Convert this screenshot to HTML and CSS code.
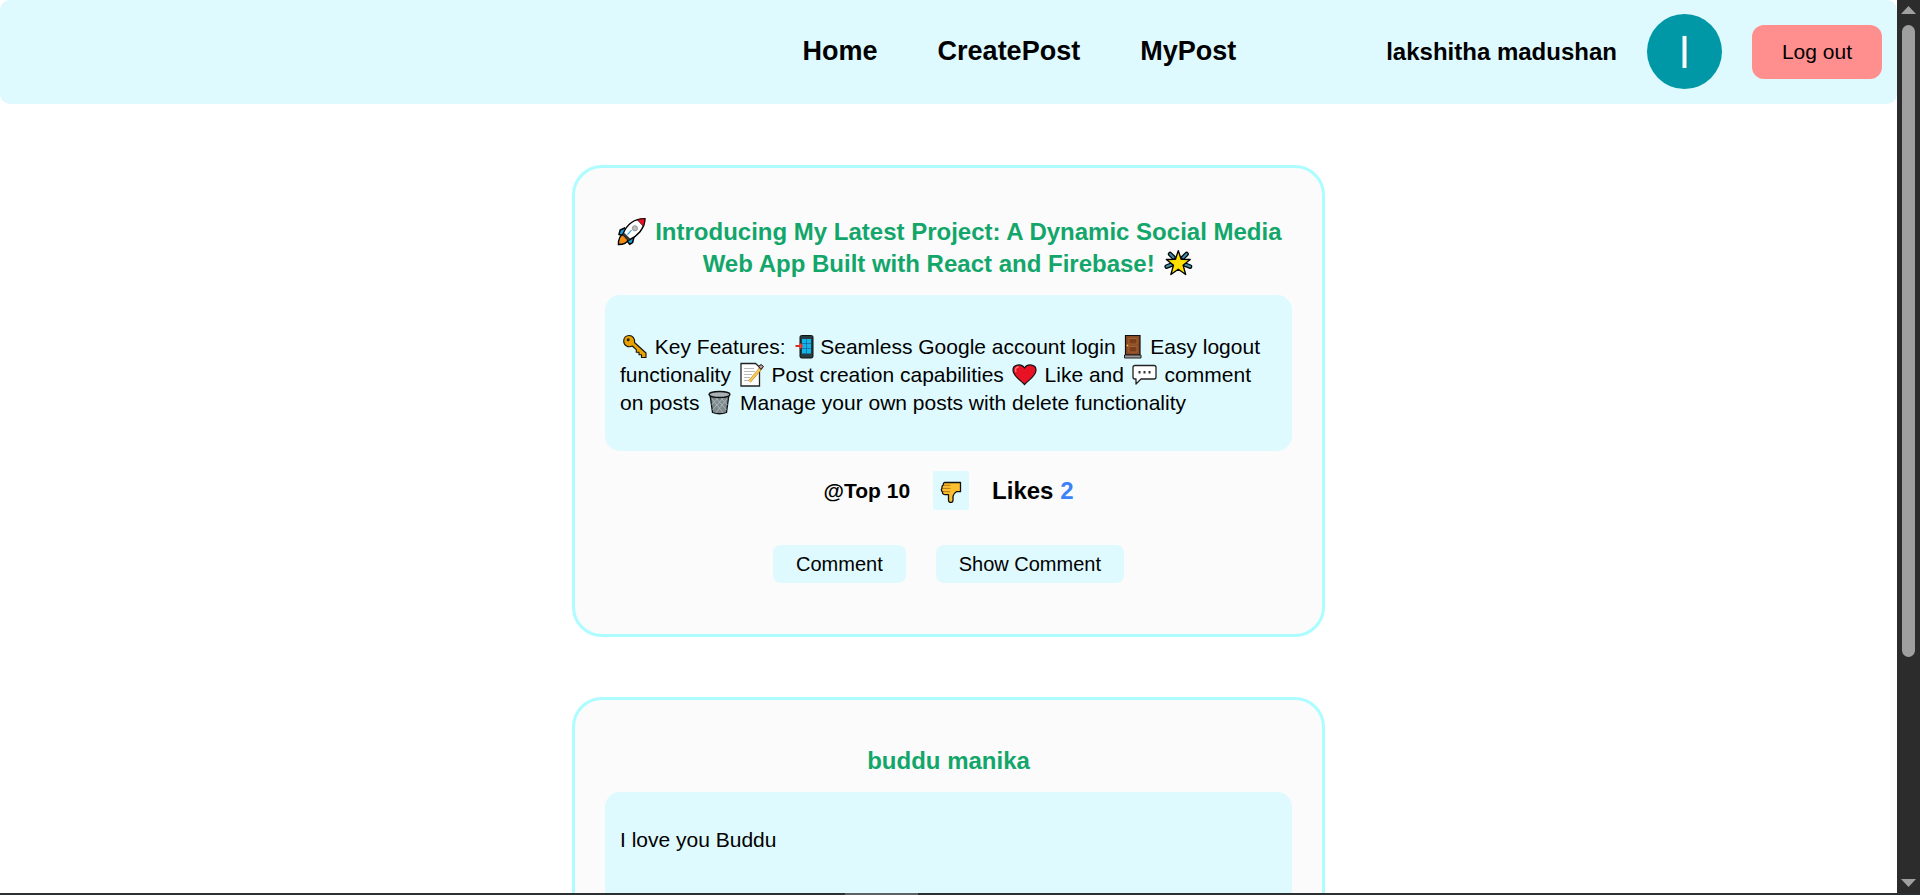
FILE: index.html
```html
<!DOCTYPE html>
<html lang="en">
<head>
<meta charset="utf-8">
<title>Home</title>
<link rel="stylesheet" href="styles.css">
</head>
<body>
<div class="window">
  <div class="page">
    <header class="navbar">
      <nav class="nav-links">
        <a href="#">Home</a>
        <a href="#">CreatePost</a>
        <a href="#">MyPost</a>
      </nav>
      <div class="user">
        <span class="user-name">lakshitha madushan</span>
        <span class="avatar">l</span>
        <button class="logout" type="button">Log out</button>
      </div>
    </header>
    <main class="feed">
      <article class="post">
        <h2 class="post-title"><svg class="emoji" viewBox="0 0 29 28" role="img" aria-label="rocket"><path d="M9 12 4.500 14 3.500 18l4 1M17 19l-1.500 6-2.500 1.500-3-3.500" fill="#1ba1e2" stroke="#000" stroke-width="1.300"/><path d="M7 18c-3 1-4 5-4 8.700 4 0 7.500-1.200 8.500-4.200z" fill="#f28c13" stroke="#000" stroke-width="1.200"/><path d="M7 17.500C10 10 16 4 26.300 4 26.300 13 19 20 12 23z" fill="#fff" stroke="#000" stroke-width="1.300"/><path d="M19.500 5c2-.7 4.400-.9 6.700-1 0 2.400-.4 4.700-1.200 6.800z" fill="#e81224" stroke="#000" stroke-width=".6"/><circle cx="17.500" cy="12.500" r="2.300" fill="#bbb" stroke="#888" stroke-width=".7"/><path d="M7.500 17.500l5 5" stroke="#333" stroke-width="2.500"/><path d="M11 18l3.500-4" stroke="#1ba1e2"/></svg> Introducing My Latest Project: A Dynamic Social Media Web App Built with React and Firebase! <svg class="emoji" viewBox="0 0 29 28" role="img" aria-label="glowing star"><path d="M8 7l3 3M22.500 7l-3 3M5 18l5-2M25.500 18l-5-2" stroke="#000" stroke-width="4" stroke-linecap="round"/><path d="M8 7l3 3M22.500 7l-3 3M5 18l5-2M25.500 18l-5-2" stroke="#3f8eaa" stroke-width="1.800" stroke-linecap="round"/><path d="M15.200 4l2.500 7.600 8 .2-6.300 5 2.300 8.200-6.500-4.600L8.700 25l2.300-8.200-6.300-5 8-.2z" fill="#ffe000" stroke="#000" stroke-width="1.200" stroke-linejoin="round"/></svg></h2>
        <div class="post-body">
          <p><svg class="emoji" viewBox="0 0 29 28" role="img" aria-label="key"><path d="M14.500 11.500L26 22v4.500h-4.500v-2.800H19v-2.500h-2.700v-2.500L12.300 15c-4 2-8.600-.5-8.600-5 0-3.500 2.500-5.500 5.500-5.500 3.500 0 6 3.200 5.300 7z" fill="#e8a100" stroke="#111" stroke-width="1.100" stroke-linejoin="round"/><circle cx="8.200" cy="8.800" r="1.500" fill="#222"/></svg> Key Features: <svg class="emoji emoji-narrow" viewBox="0 0 23 28" role="img" aria-label="mobile phone with arrow"><rect x="9" y="4.500" width="13" height="22.500" rx="1.500" fill="#263c40" stroke="#111"/><rect x="11" y="8" width="9" height="14.500" fill="#10b5ee"/><path d="M15.500 8v14M11 12.500h9M11 17.500h9" stroke="#176c96" stroke-width=".8"/><path d="M4.500 15h6" stroke="#d62b1f" stroke-width="2"/><path d="M8.500 11.500l4 3.500-4 3.500z" fill="#e83b2c"/></svg> Seamless Google account login <svg class="emoji emoji-narrow" viewBox="2 0 23 28" role="img" aria-label="door"><path d="M6.500 4.500h14.500V24H6.500z" fill="#8b4b24" stroke="#111" stroke-width="1.200"/><path d="M10 7.500h8V13h-8zM10 15.500h8V21h-8z" fill="#7a3e1c" stroke="#b06b3b" stroke-width=".8"/><path d="M5.500 24h16.500v3H5.500z" fill="#999" stroke="#222"/><circle cx="8.500" cy="14.500" r="1" fill="#f4c542"/></svg> Easy logout functionality <svg class="emoji" viewBox="0 0 29 28" role="img" aria-label="memo"><path d="M4 4.500h14.500l4 3.500v19H4z" fill="#fff" stroke="#222" stroke-width="1.300"/><path d="M7 9.500h10M7 12.500h11M7 15.500h8M7 18.500h6M7 21.500h5" stroke="#bbb"/><path d="M12.500 22.500L24.500 8.500" stroke="#a67a2a" stroke-width="3"/><path d="M12.500 22.500L24 9" stroke="#fbcb52" stroke-width="2"/><path d="M21.500 7.500L24 5.500l2.500 2-2.500 3z" fill="#c99" stroke="#111"/></svg> Post creation capabilities <svg class="emoji" viewBox="0 0 29 28" role="img" aria-label="red heart"><path d="M14.500 25.500C11 21.500 3.500 17.500 3 11.500c-.4-6 8-7.500 11.500-2.500C18 4 26.400 5.500 26 11.500c-.5 6-8 10-11.500 14z" fill="#e81224" stroke="#111" stroke-width="1.200"/><path d="M6 13c-1.300-3 .3-5 2.500-5" fill="none" stroke="#ff7c82" stroke-width="1.300"/></svg> Like and <svg class="emoji" viewBox="0 0 29 28" role="img" aria-label="speech balloon"><path d="M5 6.500h19q2 0 2 2v9.500q0 2-2 2H11l-5 5v-5H5q-2 0-2-2V8.500q0-2 2-2z" fill="#fff" stroke="#222" stroke-width="1.300" stroke-linejoin="round"/><path d="M8.500 12h2v2.500h-2zM13.500 12h2v2.500h-2zM18.500 12h2v2.500h-2z" fill="#333"/></svg> comment on posts <svg class="emoji" viewBox="0 0 29 28" role="img" aria-label="wastebasket"><path d="M5 7.500l2.500 18q7 2.500 14 0L24 7.500z" fill="#7e898e" stroke="#111" stroke-width="1.300"/><path d="M7 12l11 13.500M9 9l12.500 14M15 10l7.500 8M22 12L11 25.500M20 9L7.500 23M14 10l-7.500 8" stroke="#b4bfc3" stroke-width=".8"/><ellipse cx="14.500" cy="7.500" rx="10.500" ry="3" fill="#a9b1b5" stroke="#111" stroke-width="1.300"/></svg> Manage your own posts with delete functionality</p>
        </div>
        <div class="post-meta">
          <h4 class="author">@Top 10</h4>
          <button class="like" type="button" aria-label="Dislike"><svg class="thumb" viewBox="0 0 22 24" aria-hidden="true"><path d="M5 3.500h15.500v9.200h-4.200c-1.500 1-2.800 2.500-3.300 4.500v4c0 1.700-1 2.300-2.100 2.300-1.400 0-2.400-1-2.400-2.300v-5.500H5.200c-2 0-3-1.300-2.600-2.800C1.100 12 1 10.200 2.200 9.300 1.600 7.700 2.200 6.600 3.400 6.200 3 4.700 3.700 3.500 5 3.500z" fill="#fdbf2d" stroke="#111" stroke-width="1.300" stroke-linejoin="round"/><path d="M3.400 6.300h7M2.400 9.400h8M2.800 12.700h7.500" stroke="#9c6a14" stroke-width=".8"/></svg></button>
          <h3 class="likes">Likes <span class="like-count">2</span></h3>
        </div>
        <div class="post-actions">
          <button class="action" type="button">Comment</button>
          <button class="action" type="button">Show Comment</button>
        </div>
      </article>
      <article class="post">
        <h2 class="post-title">buddu manika</h2>
        <div class="post-body">
          <p>I love you Buddu</p>
          <p>&nbsp;</p>
        </div>
      </article>
    </main>
  </div>
  <div class="scrollbar" aria-hidden="true">
    <svg class="arrow" viewBox="0 0 15 8"><path d="M7.500 0L15 8H0z" fill="#a0a0a0"/></svg>
    <div class="track"><div class="scroll-thumb"></div></div>
    <svg class="arrow" viewBox="0 0 15 8"><path d="M0 0h15L7.500 8z" fill="#a0a0a0"/></svg>
  </div>
</div>
<div class="edge"><div class="edge-tab"></div></div>
</body>
</html>
```
FILE: styles.css
```css
* {
  box-sizing: border-box;
}

body {
  margin: 0;
  height: 100vh;
  display: flex;
  flex-direction: column;
  overflow: hidden;
  background: #fff;
  color: #000;
  font-family: "Liberation Sans", Arial, sans-serif;
  font-size: 21px;
}

button {
  border: 0;
  color: inherit;
  font-family: inherit;
  cursor: pointer;
}

.window {
  flex: 1;
  min-height: 0;
  display: flex;
}

.page {
  flex: 1;
  min-width: 0;
  overflow: hidden;
}

.navbar {
  display: flex;
  align-items: center;
  justify-content: flex-end;
  gap: 150px;
  padding: 14px 15px 15px;
  background: #defafe;
  border-radius: 10px;
}

.nav-links {
  display: flex;
  gap: 60px;
}

.nav-links a {
  color: #000;
  font-size: 27px;
  font-weight: bold;
  text-decoration: none;
}

.user {
  display: flex;
  align-items: center;
  gap: 30px;
}

.user-name {
  font-size: 24px;
  font-weight: bold;
}

.avatar {
  display: flex;
  align-items: center;
  justify-content: center;
  width: 75px;
  height: 75px;
  padding-top: 3px;
  border-radius: 50%;
  background: #0097a7;
  color: #fff;
  font-family: Roboto, sans-serif;
  font-size: 42px;
}

.logout {
  padding: 15px 30px;
  border-radius: 12px;
  background: #ff8f8f;
  font-size: 21px;
}

.feed {
  display: flex;
  flex-direction: column;
  align-items: center;
  gap: 60px;
  padding-top: 61px;
}

.post {
  width: 100%;
  max-width: 753px;
  padding: 30px;
  border: 3px solid #adfcff;
  border-radius: 30px;
  background: #fbfbfb;
}

.post-title {
  margin: 16px 0 17px;
  color: #13a66b;
  font-size: 24px;
  line-height: 29px;
  text-align: center;
}

.emoji {
  width: 29px;
  height: 28px;
  vertical-align: -5px;
}

.emoji-narrow {
  width: 23px;
}

.post-title .emoji {
  width: 33px;
  height: 32px;
  vertical-align: -6px;
}

.post-body {
  padding: 15px;
  border-radius: 15px;
  background: #defafe;
}

.post-body p {
  margin: 21px 0;
}

.post-meta {
  display: flex;
  align-items: center;
  justify-content: center;
  gap: 23px;
  margin-top: 20px;
}

.author,
.likes {
  margin: 0;
}

.author {
  font-size: 21px;
}

.likes {
  font-size: 24px;
}

.like-count {
  color: #3b82f6;
}

.like {
  display: flex;
  padding: 8px 7px 7px;
  border-radius: 2px;
  background: #defafe;
}

.thumb {
  width: 22px;
  height: 24px;
}

.post-actions {
  display: flex;
  justify-content: center;
  gap: 30px;
  margin: 35px 0 21px;
}

.action {
  height: 38px;
  padding: 0 23px;
  border-radius: 8px;
  background: #defafe;
  font-size: 20px;
}

.scrollbar {
  display: flex;
  flex-direction: column;
  align-items: center;
  gap: 11px;
  width: 23px;
  padding: 6px 0;
  background: #2c2c2c;
}

.arrow {
  width: 15px;
  height: 8px;
}

.track {
  flex: 1;
}

.scroll-thumb {
  width: 13px;
  height: 75%;
  border-radius: 7px;
  background: #9f9f9f;
}

.edge {
  height: 2px;
  background: #2b3035;
}

.edge-tab {
  width: 73px;
  height: 2px;
  margin-left: 44%;
  background: #5c6367;
}
```
